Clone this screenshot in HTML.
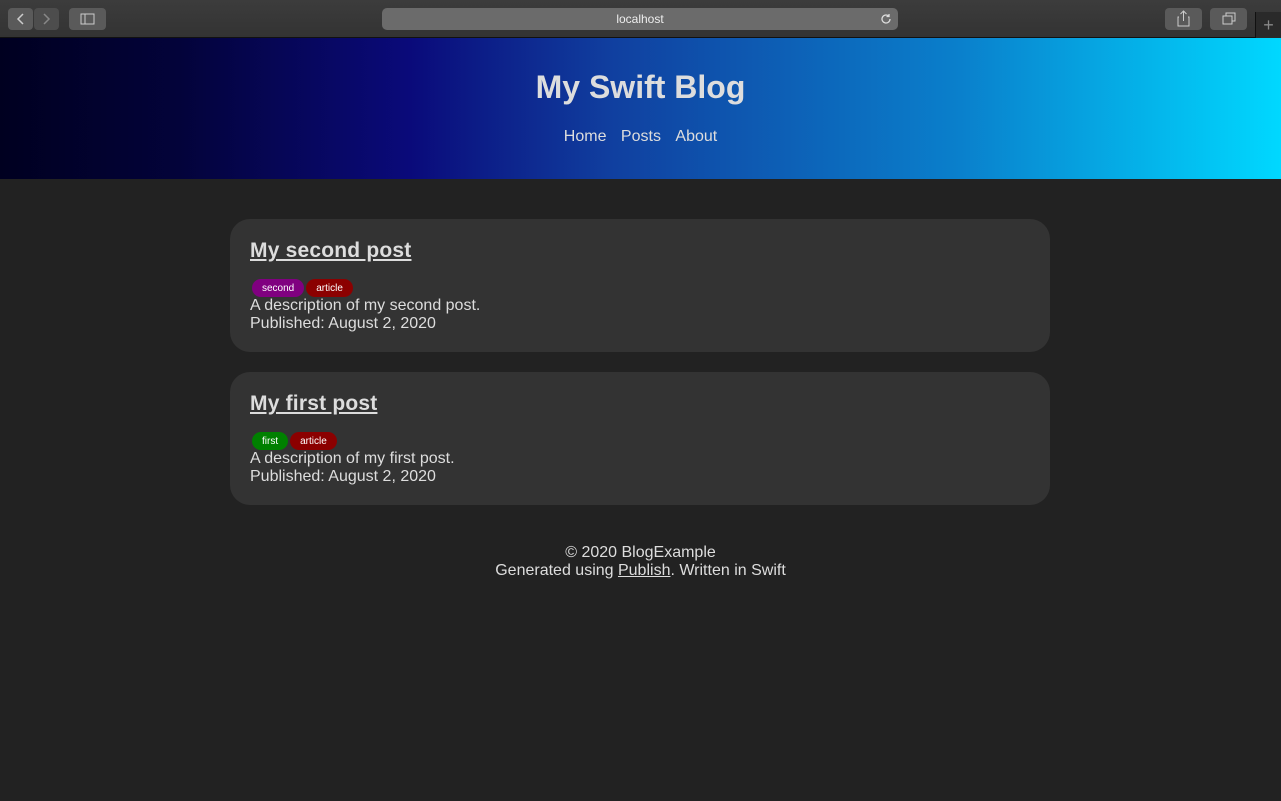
<!DOCTYPE html>
<html><head><meta charset="utf-8"><style>
*{margin:0;padding:0;box-sizing:border-box}
body{width:1281px;height:801px;background:#222;font-family:"Liberation Sans",Helvetica,sans-serif;color:#ddd;overflow:hidden;position:relative}
.tb{position:absolute;left:0;top:0;width:1281px;height:38px;background:linear-gradient(#3c3c3c,#333);border-bottom:1px solid #111}
.btn{position:absolute;top:8px;height:22px;background:#5a5a5a;border-radius:4px}
.url{position:absolute;left:382px;top:8px;width:516px;height:22px;background:#6b6b6b;border-radius:5px;text-align:center;font-size:12px;line-height:22px;color:#eee}
header{position:absolute;top:38px;left:0;width:1281px;height:141px;background:linear-gradient(90deg,#000020 0%,#03033a 14%,#0a0a7a 32%,#1040a0 48%,#0a80cc 75%,#00d8ff 100%);text-align:center}
header h1{font-size:32px;font-weight:bold;color:#ddd;margin-top:30px;line-height:38px}
header nav{margin-top:22px;font-size:16px}
header nav a{color:#ddd;text-decoration:none;margin:0 5px}
.card{position:absolute;left:230px;width:820px;height:133px;background:#333;border-radius:20px;padding:0 20px}
.card h2{font-size:21px;letter-spacing:0.2px;font-weight:bold;text-decoration:underline;margin-top:19px;line-height:26px}
.tags{margin-top:15px;height:18px;font-size:10px;padding-left:2px}
.tag{display:inline-block;height:18px;line-height:16px;padding:2px 10px 0;border-radius:9px;color:#fff;margin-right:2px;vertical-align:top}
.card p{font-size:16px;line-height:18px}
footer{position:absolute;top:544px;width:1281px;text-align:center;font-size:16px;line-height:18px}
</style></head><body>
<div class="tb">
<div class="btn" style="left:8px;width:25px"><svg width="25" height="22"><path d="M15 6l-5 5 5 5" stroke="#ccc" stroke-width="1.5" fill="none"/></svg></div>
<div class="btn" style="left:34px;width:25px;background:#4d4d4d"><svg width="25" height="22"><path d="M10 6l5 5-5 5" stroke="#888" stroke-width="1.5" fill="none"/></svg></div>
<div class="btn" style="left:69px;width:37px"><svg width="37" height="22"><rect x="12" y="6" width="13" height="10" stroke="#ccc" fill="none"/><line x1="16" y1="6" x2="16" y2="16" stroke="#ccc"/></svg></div>
<div class="url">localhost<svg style="position:absolute;right:6px;top:5px" width="12" height="12"><path d="M10 6a4 4 0 1 1-1.5-3.1M9 1v2.5H6.5" stroke="#ddd" stroke-width="1.3" fill="none"/></svg></div>
<div class="btn" style="left:1165px;width:37px"><svg width="37" height="22"><path d="M14 9h-1v9h11V9h-1M18.5 3v10M15.5 6l3-3 3 3" stroke="#ccc" fill="none"/></svg></div>
<div class="btn" style="left:1210px;width:37px"><svg width="37" height="22"><rect x="13" y="8" width="9" height="8" stroke="#ccc" fill="none"/><path d="M16 8V5h9v8h-3" stroke="#ccc" fill="none"/></svg></div>
<div style="position:absolute;left:1255px;top:12px;width:26px;height:26px;background:#2a2a2a;border-left:1px solid #111;color:#888;font-size:18px;text-align:center;line-height:26px">+</div>
</div>
<header><h1>My Swift Blog</h1><nav><a>Home</a> <a>Posts</a> <a>About</a></nav></header>
<div class="card" style="top:219px"><h2>My second post</h2><div class="tags"><span class="tag" style="background:#800080">second</span><span class="tag" style="background:#8b0000">article</span></div><p>A description of my second post.</p><p>Published: August 2, 2020</p></div>
<div class="card" style="top:372px"><h2>My first post</h2><div class="tags"><span class="tag" style="background:#008000">first</span><span class="tag" style="background:#8b0000">article</span></div><p>A description of my first post.</p><p>Published: August 2, 2020</p></div>
<footer><p>© 2020 BlogExample</p><p>Generated using <u>Publish</u>. Written in Swift</p></footer>
</body></html>
